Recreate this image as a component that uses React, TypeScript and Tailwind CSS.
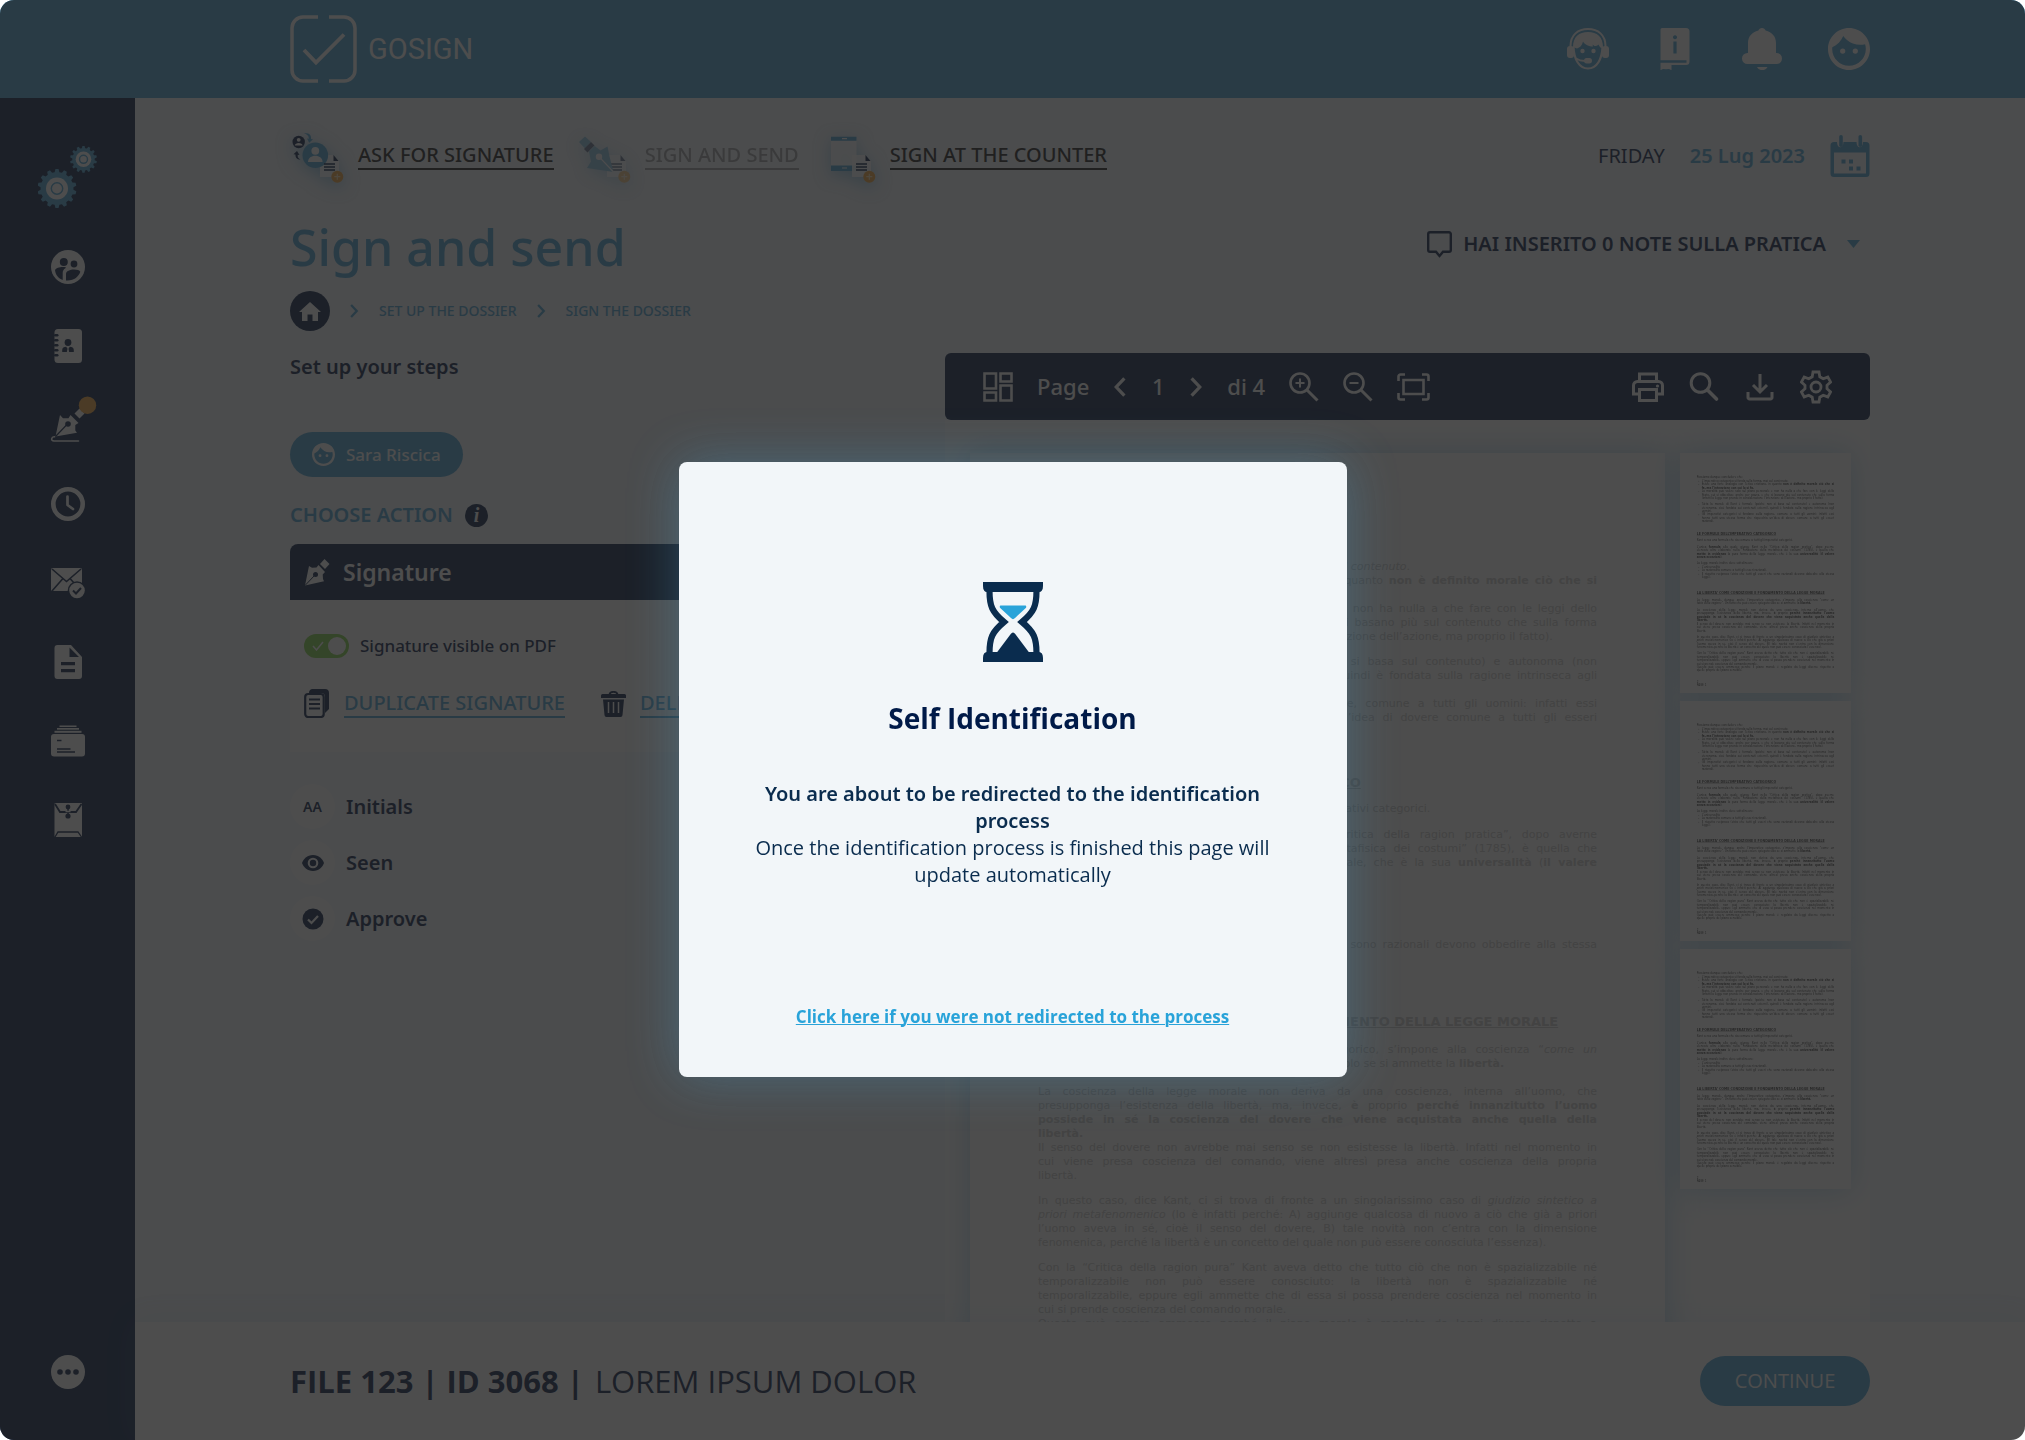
import React, { useState } from 'react';

interface IconProps {
  className?: string;
}

// builds the outline of a round cog with square teeth
const cogPath = (cx: number, cy: number, outer: number, inner: number, teeth: number) => {
  const step = (Math.PI * 2) / teeth;
  const point = (r: number, a: number) => `${(cx + r * Math.cos(a)).toFixed(2)} ${(cy + r * Math.sin(a)).toFixed(2)}`;
  let d = '';
  for (let i = 0; i < teeth; i++) {
    const a = i * step - Math.PI / 2;
    d += `${i === 0 ? 'M' : 'L'}${point(inner, a - step * 0.32)}L${point(outer, a - step * 0.18)}L${point(outer, a + step * 0.18)}L${point(inner, a + step * 0.32)}`;
  }
  return d + 'Z';
};

const Logo: React.FC = () => (
  <svg viewBox="0 0 67 68" className="h-[68px] w-[67px]" fill="none" stroke="currentColor" strokeWidth="3.5">
    <path d="M28 2H13A11 11 0 0 0 2 13v42a11 11 0 0 0 11 11h15M39 2h15a11 11 0 0 1 11 11v42a11 11 0 0 1-11 11H39" />
    <path d="M14 35l12 12.500L54 19.500" strokeWidth="3.800" />
  </svg>
);

const SupportIcon: React.FC<IconProps> = ({ className }) => (
  <svg viewBox="0 0 42 42" className={className} fill="none" stroke="currentColor">
    <path d="M3.500 18C3.500 7 11 1 21 1s17.500 6 17.500 17" strokeWidth="2" />
    <path d="M6.500 19C7 31 12 40.500 21 40.500S35 31 35.500 19" strokeWidth="2.200" />
    <path d="M6 19C6 9 12 4 21 4s15 5 15 15l-2 1c-1-1-2-2-2.500-3.500-1 1-2.500 1.500-4 1.500l-2-1.500.5 2c-4 0-8-1.500-10-5-1 4-3 6-6 7z" fill="currentColor" stroke="none" />
    <rect x="0" y="18" width="7" height="12" rx="3" fill="currentColor" stroke="none" />
    <rect x="35" y="18" width="7" height="12" rx="3" fill="currentColor" stroke="none" />
    <circle cx="15.500" cy="23" r="2.200" fill="currentColor" stroke="none" />
    <circle cx="26.500" cy="23" r="2.200" fill="currentColor" stroke="none" />
    <path d="M9 30.500c3 2 6 2.500 9 2.500" strokeWidth="1.800" />
    <rect x="17" y="30" width="8" height="5.500" rx="2.700" fill="currentColor" stroke="none" />
  </svg>
);

const ManualIcon: React.FC<IconProps> = ({ className }) => (
  <svg viewBox="0 0 42 42" className={className} fill="currentColor">
    <path fillRule="evenodd" d="M6.500 1.500A1.500 1.500 0 0 1 8 0h24a3.500 3.500 0 0 1 3.500 3.500v30a3.500 3.500 0 0 1-3.500 3.500H17.500v5.200L15 41l-3 .3-3-.3-2.500 1.200zM6.500 32.300v2.400H17.500V34.700H32.500v-2.400zM21 7.200a2 2 0 1 0 .01 0zM19.400 13.500v12h3.200v-12z" />
  </svg>
);

const BellIcon: React.FC<IconProps> = ({ className }) => (
  <svg viewBox="0 0 42 42" className={className} fill="currentColor">
    <path d="M21 0c1.800 0 3 1 3.600 2.500C31 4 35 8.500 35 15v10h.5a5.300 5.300 0 0 1 0 11h-29a5.300 5.300 0 0 1 0-11H7V15C7 8.500 11 4 17.400 2.500 18 1 19.200 0 21 0z" />
    <path d="M16 39h10.500c-1 2-3 3.200-5.200 3.200S17 41 16 39z" />
  </svg>
);

const FaceIcon: React.FC<IconProps> = ({ className }) => (
  <svg viewBox="2 2 20 20" className={className} fill="currentColor">
    <path d="M9 11.750a1.250 1.250 0 1 0 0 2.500 1.250 1.250 0 0 0 0-2.500zm6 0a1.250 1.250 0 1 0 0 2.500 1.250 1.250 0 0 0 0-2.500zM12 2C6.480 2 2 6.480 2 12s4.480 10 10 10 10-4.480 10-10S17.520 2 12 2zm0 18c-4.410 0-8-3.590-8-8 0-.29.02-.58.05-.86 2.360-1.050 4.230-2.980 5.210-5.370a9.974 9.974 0 0 0 10.410 3.970c.21.71.33 1.470.33 2.260 0 4.410-3.590 8-8 8z" />
  </svg>
);

const CogsIcon: React.FC = () => (
  <svg viewBox="0 0 60 62" className="h-[62px] w-[60px]">
    <g fill="#4ba5d7">
      <path d={cogPath(19, 42.5, 19.5, 16.5, 14)} />
      <path d={cogPath(45.5, 13.3, 13.5, 11.2, 14)} />
    </g>
    <g fill="#fff" stroke="#4ba5d7" strokeWidth="1.5">
      <circle cx="19" cy="42.500" r="11" stroke="none" />
      <circle cx="19" cy="42.500" r="5.700" />
      <circle cx="45.500" cy="13.300" r="7.800" stroke="none" />
      <circle cx="45.500" cy="13.300" r="4" />
    </g>
  </svg>
);

const sideIcon = 'h-[34px] w-[34px] overflow-visible';

const PeopleIcon: React.FC = () => (
  <svg viewBox="0 0 34 34" className={sideIcon}>
    <circle cx="17" cy="17" r="17" fill="#fff" />
    <g fill="#0a2048">
      <circle cx="12.800" cy="12" r="4" />
      <circle cx="23" cy="14" r="3.400" />
      <path d="M4 20c1-2.500 6-3.500 9.500-3 2 .2 1.500.8.5 1.500-1.500 1-2.300 2.500-2.300 4.500v7C7.500 28.500 4.500 25 4 20z" />
      <path d="M15 30.500V24c0-3 4-4.500 8-4.500 3 0 5.800.8 6.300 2.300-1.500 5-7 9.500-14.300 8.700z" />
    </g>
  </svg>
);

const ContactsIcon: React.FC = () => (
  <svg viewBox="0 0 34 34" className={sideIcon}>
    <rect x="3.500" y="0" width="27.500" height="34" rx="3.500" fill="#fff" />
    <g fill="#0a2048">
      {[5, 10, 15, 20, 25].map((y) => (
        <rect key={y} x="3" y={y} width="4.500" height="2.500" rx="1.200" />
      ))}
      <circle cx="17" cy="13.500" r="3.400" />
      <path d="M11.200 23v-2c0-2.300 1.800-3.300 4-3.300l1.300 2-.7 3.300zM22.800 23v-2c0-2.300-1.800-3.300-4-3.300l-1.300 2 .7 3.300z" />
    </g>
  </svg>
);

const PenIcon: React.FC = () => (
  <svg viewBox="0 0 34 34" className={sideIcon}>
    <g fill="#fff">
      <path d="M9 7l3 3.200h5.500l2-3.200 8 8-3.200 2v5.500l1.700 2.300L4.500 28.500z" />
      <path d="M23.500 5.500l5-5 5 5-5 5z" />
    </g>
    <path d="M4.500 28.500L15.500 17" stroke="#0a2048" strokeWidth="1.200" />
    <circle cx="17" cy="16" r="2.800" fill="#0a2048" />
    <path d="M3.500 28.800C.5 28.500-.8 32.800 3 33h24.500" fill="none" stroke="#fff" strokeWidth="1.600" strokeLinecap="round" />
    <circle cx="36.500" cy="-2.800" r="8.700" fill="#f5a63c" />
  </svg>
);

const ClockIcon: React.FC = () => (
  <svg viewBox="0 0 34 34" className={sideIcon} fill="none" stroke="#fff">
    <circle cx="17" cy="17" r="14.700" strokeWidth="4.600" />
    <path d="M16.500 9.500V18l5.500 4" strokeWidth="2.700" strokeLinecap="round" strokeLinejoin="round" />
  </svg>
);

const MailIcon: React.FC = () => (
  <svg viewBox="0 0 34 34" className={sideIcon}>
    <rect x="0" y="2" width="31" height="23" rx="1.500" fill="#fff" />
    <path d="M1 3l14.500 12.500L30 3M1 25l10.500-12M30 25L19.500 13" fill="none" stroke="#0a2048" strokeWidth="1.600" />
    <circle cx="26" cy="24.500" r="9.300" fill="#0a2048" />
    <circle cx="26" cy="24.500" r="7.800" fill="#fff" />
    <path d="M22 24.500l3 3 5-5.500" fill="none" stroke="#0a2048" strokeWidth="2" />
  </svg>
);

const DocumentIcon: React.FC = () => (
  <svg viewBox="0 0 34 34" className={sideIcon}>
    <path d="M6 0h14l11 12v19a3 3 0 0 1-3 3H6.500a3 3 0 0 1-3-3V3a3 3 0 0 1 3-3z" fill="#fff" />
    <path d="M18.500 2.500v9.500H28zM10 17h14v3.300H10zM10 24h14v3.300H10z" fill="#0a2048" />
  </svg>
);

const CardsIcon: React.FC = () => (
  <svg viewBox="0 0 34 34" className={sideIcon}>
    <g fill="#fff">
      <rect x="8.500" y="1.500" width="17" height="1.500" />
      <rect x="6" y="4" width="22" height="1.700" />
      <rect x="3.500" y="6.800" width="27" height="2" />
      <rect x="0" y="10" width="34" height="22.500" rx="3" />
    </g>
    <path d="M6 16.500h4.500M6 25h13.500M6 28h18" stroke="#0a2048" strokeWidth="1.500" />
  </svg>
);

const EnvelopeIcon: React.FC = () => (
  <svg viewBox="0 0 34 34" className={sideIcon}>
    <rect x="3.500" y="0" width="27.500" height="34" rx="1" fill="#fff" />
    <g fill="none" stroke="#0a2048" strokeWidth="1.800">
      <path d="M4 1l5 8h16l5.500-8" />
      <path d="M4 34l3-5h20l3.500 5" strokeWidth="1.300" />
    </g>
    <rect x="16.300" y="4" width="1.500" height="9" fill="#0a2048" />
    <circle cx="17" cy="4" r="2.400" fill="#0a2048" />
    <circle cx="17" cy="13" r="2.600" fill="#0a2048" />
    <path d="M14.500 8.500h5" stroke="#fff" strokeWidth="1.500" />
  </svg>
);

const MoreIcon: React.FC = () => (
  <svg viewBox="0 0 34 34" className={sideIcon}>
    <circle cx="17" cy="17" r="17" fill="#fff" />
    <g fill="#0a2048">
      <circle cx="9" cy="17" r="2.800" />
      <circle cx="17" cy="17" r="2.800" />
      <circle cx="25" cy="17" r="2.800" />
    </g>
  </svg>
);

// small sheet with an orange plus, shared by the three quick links
const SheetBadge: React.FC = () => (
  <g>
    <path d="M30 27h13l6 6v16H30z" fill="#fff" fillOpacity="0.85" />
    <path d="M43.500 27l5 6h-5z" fill="#0a2048" />
    <path d="M34 36h11M34 39h11M34 42h11" stroke="#0a2048" strokeWidth="1.300" />
    <circle cx="47.300" cy="48.700" r="6" fill="#f5a63c" />
    <path d="M47.300 45.700v6M44.300 48.700h6" stroke="#ffe3b5" strokeWidth="1.200" />
  </g>
);

const quickIcon = 'h-[56px] w-[56px] overflow-visible drop-shadow-[0_4px_8px_rgba(40,140,200,0.5)]';

const AskIcon: React.FC = () => (
  <svg viewBox="0 0 56 56" className={quickIcon}>
    <circle cx="8.700" cy="14" r="6.200" fill="#0a2048" />
    <circle cx="8.700" cy="11.800" r="1.900" fill="#fff" />
    <path d="M4.800 17.500c0-3.500 7.800-3.500 7.800 0z" fill="#fff" />
    <path d="M14 5.500c5-1 7.500 1.500 7 5.500l2 .3-3.800 3.500L17 10.500l1.800.2C19 8 17 6 14 5.500z" fill="#4ba5d7" />
    <path d="M10.500 31.500c-3.500 0-5.300-2-5-5l-2-.3L7 23l2.500 4-1.800-.3c-.3 2.500.8 4 2.800 4.800z" fill="#0a2048" />
    <path d="M30 27h13l6 6v16H30z" fill="#fff" fillOpacity="0.85" />
    <circle cx="25.300" cy="27.300" r="12.800" fill="#4ba5d7" />
    <circle cx="25.300" cy="22.800" r="3.900" fill="#fff" />
    <path d="M18 34c0-8.500 14.600-8.500 14.600 0z" fill="#fff" />
    <path d="M43.500 27l5 6h-5z" fill="#0a2048" />
    <path d="M34 36h11M34 39h11M34 42h11" stroke="#0a2048" strokeWidth="1.300" />
    <circle cx="47.300" cy="48.700" r="6" fill="#f5a63c" />
    <path d="M47.300 45.700v6M44.300 48.700h6" stroke="#ffe3b5" strokeWidth="1.200" />
  </svg>
);

const SendIcon: React.FC = () => (
  <svg viewBox="0 0 56 56" className={`${quickIcon} opacity-60`}>
    <SheetBadge />
    <path d="M2 14l6-5.500 6 5.500-6 6.500z" fill="#4ba5d7" />
    <path d="M7 21l7-7 3.500 3.500-7 7z" fill="#0a2048" />
    <path d="M12 23.500l5.500-5.500 6 4.500 7-4 2 10 4 15.500-26.500-4 4-6.500z" fill="#4ba5d7" />
    <path d="M22 28.700L36.500 44" stroke="#fff" strokeWidth="1.200" />
    <circle cx="22" cy="28.700" r="3.200" fill="#fff" />
  </svg>
);

const CounterIcon: React.FC = () => (
  <svg viewBox="0 0 56 56" className={quickIcon}>
    <rect x="9" y="9" width="25.500" height="34" fill="#fff" fillOpacity="0.85" />
    <path d="M9 8.700h25.500v4H9zM9 37.500h25.500V43H9z" fill="#4ba5d7" />
    <path d="M20 10.700h5M20 40h5" stroke="#fff" strokeWidth="1.200" />
    <SheetBadge />
  </svg>
);

const CalendarIcon: React.FC = () => (
  <svg viewBox="0 0 40 43" className="h-[43px] w-[40px]" fill="#4ba5d7">
    <path fillRule="evenodd" d="M4 7h3c0 7 6.500 7 6.500 0h13c0 7 6.500 7 6.500 0h3a3.500 3.500 0 0 1 3.500 3.500v28a3.500 3.500 0 0 1-3.500 3.500H4a3.500 3.500 0 0 1-3.500-3.500v-28A3.500 3.500 0 0 1 4 7zm0 10.500v21h32v-21z" />
    <rect x="9.200" y="0" width="3.600" height="12" rx="1.800" />
    <rect x="28.500" y="0" width="3.600" height="12" rx="1.800" />
    <path d="M11.500 24.500h4v4h-4zM19 24.500h4v4h-4zM19 31.500h4v4h-4zM26.500 31.500h4v4h-4z" />
  </svg>
);

const Chevron: React.FC<IconProps & { back?: boolean }> = ({ className, back }) => (
  <svg viewBox="0 0 12 18" className={className} fill="none" stroke="currentColor" strokeWidth="3">
    <path d={back ? 'M10.500 1L3 9l7.500 8' : 'M1.500 1L9 9l-7.500 8'} />
  </svg>
);

const toolIcon = 'h-8 w-8';

const LayoutIcon: React.FC = () => (
  <svg viewBox="0 0 30 30" className="h-[30px] w-[30px]" fill="none" stroke="currentColor" strokeWidth="2.6">
    <path d="M1.500 1.500h11.500v15H1.500zM17.500 1.500h11v8h-11zM17.500 13.500h11v15h-11zM1.500 20.500h11.500v8H1.500z" />
  </svg>
);

const ZoomIcon: React.FC<{ plus?: boolean }> = ({ plus }) => (
  <svg viewBox="0 0 30 30" className="h-[30px] w-[30px]" fill="none" stroke="currentColor" strokeWidth="2.6">
    <circle cx="11" cy="11" r="9.500" />
    <path d="M18 18l10.500 10.500" strokeWidth="3" />
    <path d={plus ? 'M6.500 11h9M11 6.500v9' : 'M6.500 11h9'} strokeWidth="2" />
  </svg>
);

const FitIcon: React.FC = () => (
  <svg viewBox="0 0 33 28" className="h-7 w-[33px]" fill="none" stroke="currentColor" strokeWidth="2.6">
    <path d="M6.500 7h20v14h-20z" />
    <path d="M1.500 8V3.500a2 2 0 0 1 2-2H8M25 1.500h4.500a2 2 0 0 1 2 2V8M31.500 20v4.500a2 2 0 0 1-2 2H25M8 26.500H3.500a2 2 0 0 1-2-2V20" />
  </svg>
);

const PrintIcon: React.FC = () => (
  <svg viewBox="0 0 32 32" className={toolIcon} fill="none" stroke="currentColor" strokeWidth="3">
    <path d="M7.500 10V3h17v7M7.500 23H1.500V14.500a4 4 0 0 1 4-4h21a4 4 0 0 1 4 4V23h-6" />
    <path d="M7.500 18.500h17v11h-17z" />
    <circle cx="25.500" cy="15" r="1.600" fill="currentColor" stroke="none" />
  </svg>
);

const SearchIcon: React.FC = () => (
  <svg viewBox="0 0 32 32" className={toolIcon} fill="none" stroke="currentColor" strokeWidth="3">
    <circle cx="12.500" cy="12" r="9.300" />
    <path d="M19.500 19l9 9" strokeWidth="3.600" strokeLinecap="round" />
  </svg>
);

const DownloadIcon: React.FC = () => (
  <svg viewBox="0 0 32 32" className={toolIcon} fill="none" stroke="currentColor" strokeWidth="3">
    <path d="M16 3v18M9 14l7 7 7-7M4 21v5.500a1.500 1.500 0 0 0 1.500 1.500h21a1.500 1.500 0 0 0 1.500-1.500V21" />
  </svg>
);

const GearIcon: React.FC = () => (
  <svg viewBox="0 0 32 34" className="h-[34px] w-8" fill="none" stroke="currentColor" strokeWidth="2.8">
    <path d="M13 2h6l.8 4.800 3.400 2 4.600-1.700 2.800 5-3.600 3.200v3.400l3.600 3.200-2.800 5-4.600-1.700-3.400 2L19 32h-6l-.8-4.800-3.400-2-4.600 1.700-2.800-5L5 18.700v-3.400l-3.600-3.200 2.800-5 4.600 1.700 3.400-2z" />
    <circle cx="16" cy="17" r="5" />
  </svg>
);

const NibIcon: React.FC = () => (
  <svg viewBox="0 0 27 27" className="h-[27px] w-[27px]">
    <path d="M5 7l3 1.800 4.500-.3 2-2.500 6.500 7-2.300 2.500.3 4.500 1 2.300L1 26.500z" fill="#fff" />
    <path d="M20.500 0l5 5-4.500 5-5-5z" fill="#fff" />
    <path d="M1 26.500L11 16" stroke="#0a2048" strokeWidth="1" />
    <circle cx="11.500" cy="15.500" r="2.500" fill="#0a2048" />
  </svg>
);

const CopyIcon: React.FC = () => (
  <svg viewBox="0 0 25 29" className="h-[29px] w-[25px]">
    <path d="M8 0h13a4 4 0 0 1 4 4v16l-4 4V8a4 4 0 0 0-4-4H5a4 4 0 0 1 3-4z" fill="#0a2048" />
    <rect x="1.200" y="5" width="18.500" height="23" rx="3" fill="#fff" stroke="#0a2048" strokeWidth="2.200" />
    <path d="M5 10.500h11M5 15h11M5 19.500h11" stroke="#0a2048" strokeWidth="1.800" />
  </svg>
);

const TrashIcon: React.FC = () => (
  <svg viewBox="0 0 25 26" className="h-[26px] w-[25px]">
    <path d="M8.500 3.500C9 0 16 0 16.500 3.500" fill="none" stroke="#0a2048" strokeWidth="1.800" />
    <path d="M1.500 3h22A1.500 1.500 0 0 1 25 4.500V7H0V4.500A1.500 1.500 0 0 1 1.500 3zM2 8.500h21L21.500 24a2 2 0 0 1-2 2h-14a2 2 0 0 1-2-2z" fill="#0a2048" />
    <path d="M7.500 11v11M12.500 11v11M17.500 11v11" stroke="#fff" strokeWidth="1.500" />
  </svg>
);

const EyeIcon: React.FC = () => (
  <svg viewBox="0 0 22 16" className="h-4 w-[22px]">
    <path d="M11 0C5 0 1.500 4 0 8c1.500 4 5 8 11 8s9.500-4 11-8c-1.500-4-5-8-11-8z" fill="#0a2048" />
    <circle cx="11" cy="8" r="5.300" fill="#fff" />
    <circle cx="11" cy="8" r="3.200" fill="#0a2048" />
  </svg>
);

const ApproveIcon: React.FC = () => (
  <svg viewBox="0 0 22 22" className="h-[22px] w-[22px]">
    <circle cx="11" cy="11" r="10.500" fill="#0a2048" />
    <path d="M6 11.500l3.500 3.500 6.500-7" fill="none" stroke="#fff" strokeWidth="2.200" />
  </svg>
);

const HourglassIcon: React.FC = () => (
  <svg viewBox="0 0 60 80" className="h-20 w-[60px]">
    <path d="M6.500 9C6.500 24 9 30 21 40 9 50 6.500 56 6.500 71M53.500 9c0 15-2.500 21-14.500 31 12 10 14.500 16 14.500 31" fill="none" stroke="#0a2c4e" strokeWidth="6.200" />
    <path d="M0 0h60v4c0 4-1.500 6-4 6H4C1.500 10 0 8 0 4zM0 80h60v-4c0-4-1.500-6-4-6H4c-2.500 0-4 2-4 6z" fill="#0a2c4e" />
    <path d="M13.500 71L27 53c2-3.500 4-3.500 6 0l13.500 18z" fill="#0a2c4e" />
    <path d="M18 23.500h24c1.500 0 1.500 1.500.8 2.500L32 36c-1.300 1.500-2.700 1.500-4 0L17.200 26c-.7-1-.7-2.500.8-2.500z" fill="#29a3d9" />
  </svg>
);

const sideItems = [
  { label: 'People', icon: <PeopleIcon /> },
  { label: 'Contacts', icon: <ContactsIcon /> },
  { label: 'Signatures', icon: <PenIcon /> },
  { label: 'History', icon: <ClockIcon /> },
  { label: 'Mail', icon: <MailIcon /> },
  { label: 'Documents', icon: <DocumentIcon /> },
  { label: 'Cards', icon: <CardsIcon /> },
  { label: 'Envelopes', icon: <EnvelopeIcon /> },
];

const steps = [
  { label: 'Initials', icon: <span className="text-sm">AA</span> },
  { label: 'Seen', icon: <EyeIcon /> },
  { label: 'Approve', icon: <ApproveIcon /> },
];

// text set line by line like the PDF: every line but the last fills the column
const Lines: React.FC<{ rows: React.ReactNode[] }> = ({ rows }) => (
  <>
    {rows.map((row, i) => (
      <span key={i} className={i < rows.length - 1 ? 'block whitespace-nowrap [text-align-last:justify]' : 'block whitespace-nowrap'}>
        {row}
      </span>
    ))}
  </>
);

// one page of the PDF, used full size and for the previews
const PdfSheet: React.FC<IconProps> = ({ className }) => (
  <div className={`min-h-[976px] bg-white px-[68px] pt-[93px] font-['DejaVu_Sans',sans-serif] text-[11px] leading-[14px] ${className}`}>
    <p>Possiamo dunque concludere che:</p>
    <ul className="list-disc pl-5">
      <li>L’imperativo categorico si fonda sulla forma, <i>mai sul contenuto</i>.</li>
      <li>
        <Lines
          rows={[
            <>Esiste una forte analogia con l’etica cristiana, in quanto <b>non è definito morale ciò che si</b></>,
            <b>fa, ma l’intenzione con cui lo si fa.</b>,
          ]}
        />
      </li>
      <li>
        <Lines
          rows={[
            'La moralità può valere solo sul piano personale e non ha nulla a che fare con le leggi dello',
            'Stato, cui si obbedisce anche per paura, e che si basano più sul contenuto che sulla forma',
            '(infatti la legge non prende in considerazione l’intenzione dell’azione, ma proprio il fatto).',
          ]}
        />
      </li>
    </ul>
    <ul className="mt-[11px] list-disc pl-5">
      <li>
        <Lines
          rows={[
            'Tutta la morale di Kant è formale (poiché non si basa sul contenuto) e autonoma (non',
            'eteronoma, cioè fondata sui contenuti esterni), quindi è fondata sulla ragione intrinseca agli',
            'uomini.',
          ]}
        />
      </li>
      <li>
        <Lines
          rows={[
            'Gli imperativi categorici si fondano sulla ragione, comune a tutti gli uomini: infatti essi',
            'hanno tutti una stessa forma che rispecchia un’idea di dovere comune a tutti gli esseri',
            'razionali.',
          ]}
        />
      </li>
    </ul>
    <h3 className="mt-[37px] text-[13px] leading-[14px] font-bold underline">LE FORMULE DELL’IMPERATIVO CATEGORICO</h3>
    <p className="mt-3">Kant cerca una formula che sia comune a tutti gli imperativi categorici.</p>
    <p className="mt-3">
      <Lines
        rows={[
          <>L’unica <b>formula</b> alla quale giunge Kant nella “Critica della ragion pratica”, dopo averne</>,
          'elencate altre elaborate nella “Fondazione della metafisica dei costumi” (1785), è quella che',
          <><b>mette in evidenza</b> la pura forma della legge morale, che è la sua <b>universalità</b> (<b>il valere</b></>,
          <><b>senza eccezioni</b>).</>,
        ]}
      />
    </p>
    <p className="mt-3">La legge morale inoltre deve sottolineare:</p>
    <ul className="list-disc pl-5">
      <li>L’universalità</li>
      <li>La razionalità comune a tutti gli esseri razionali.</li>
      <li>
        <Lines rows={['Il rispetto reciproco (visto che tutti gli esseri che sono razionali devono obbedire alla stessa', 'legge).']} />
      </li>
    </ul>
    <h3 className="mt-[49px] text-[13px] leading-[14px] font-bold whitespace-nowrap underline">LA LIBERTA’ COME CONDIZIONE E FONDAMENTO DELLA LEGGE MORALE</h3>
    <p className="mt-[14px]">
      <Lines
        rows={[
          <>La legge morale, dunque anche l’imperativo categorico, s’impone alla coscienza “<i>come un</i></>,
          <><i>fatto della ragione</i>”. Un fatto che può essere spiegato solo se si ammette la <b>libertà.</b></>,
        ]}
      />
    </p>
    <p className="mt-[14px]">
      <Lines
        rows={[
          'La coscienza della legge morale non deriva da una coscienza, interna all’uomo, che',
          <>presupponga l’esistenza della libertà, ma, invece, <b>è</b> proprio <b>perché innanzitutto l’uomo</b></>,
          <b>possiede in sé la coscienza del dovere che viene acquistata anche quella della</b>,
          <b>libertà.</b>,
        ]}
      />
    </p>
    <p>
      <Lines
        rows={[
          'Il senso del dovere non avrebbe mai senso se non esistesse la libertà. Infatti nel momento in',
          'cui viene presa coscienza del comando, viene altresì presa anche coscienza della propria',
          'libertà.',
        ]}
      />
    </p>
    <p className="mt-[11px]">
      <Lines
        rows={[
          <>In questo caso, dice Kant, ci si trova di fronte a un singolarissimo caso di <i>giudizio sintetico a</i></>,
          <><i>priori metafenomenico</i> (lo è infatti perché: A) aggiunge qualcosa di nuovo a ciò che già a priori</>,
          'l’uomo aveva in sé, cioè il senso del dovere,  B) tale novità non c’entra con la dimensione',
          'fenomenica, perché la libertà è un concetto del quale non può essere conosciuta l’essenza).',
        ]}
      />
    </p>
    <p className="mt-[11px]">
      <Lines
        rows={[
          'Con la “Critica della ragion pura” Kant aveva detto che tutto ciò che non è spazializzabile né',
          'temporalizzabile non può essere conosciuto: la libertà non è spazializzabile né',
          'temporalizzabile, eppure egli ammette che di essa si possa prendere coscienza nel momento in',
          'cui si prende coscienza del comando morale.',
        ]}
      />
    </p>
    <p>
      <Lines
        rows={[
          'Questo può essere ammesso perché il piano morale è regolato da leggi diverse rispetto a',
          'quelle proprie del piano sensibile.',
        ]}
      />
    </p>
    <p className="mt-8">2<br />PAGE 1</p>
  </div>
);

const Viewer: React.FC = () => {
  const [page, setPage] = useState('1');

  return (
    <section className="flex min-h-0 flex-col">
      <div className="flex h-[67px] shrink-0 items-center justify-between rounded-md bg-[#0a2048] px-[38px] font-['Noto_Sans',sans-serif] text-[22px] font-medium text-white">
        <div className="flex items-center gap-6">
          <button aria-label="Layout"><LayoutIcon /></button>
          <label htmlFor="page">Page</label>
          <button aria-label="Previous page"><Chevron back className="h-5 w-[13px]" /></button>
          <input id="page" type="text" value={page} onChange={(e) => setPage(e.target.value)} className="w-4 bg-transparent text-center" />
          <button aria-label="Next page"><Chevron className="h-5 w-[13px]" /></button>
          <span>di 4</span>
          <button aria-label="Zoom in"><ZoomIcon plus /></button>
          <button aria-label="Zoom out"><ZoomIcon /></button>
          <button aria-label="Fit page"><FitIcon /></button>
        </div>
        <div className="flex items-center gap-6">
          <button aria-label="Print"><PrintIcon /></button>
          <button aria-label="Search"><SearchIcon /></button>
          <button aria-label="Download"><DownloadIcon /></button>
          <button aria-label="Settings"><GearIcon /></button>
        </div>
      </div>
      <div className="flex min-h-0 flex-1 items-start gap-[15px] overflow-hidden bg-white pt-[33px] pr-[19px] pl-[25px]">
        <PdfSheet className="min-w-0 flex-1 text-[#cacaca] shadow-[0_0_30px_rgba(60,150,205,0.4)]" />
        <div className="flex w-[171px] shrink-0 flex-col gap-2">
          {[1, 2, 3].map((n) => (
            <div key={n} className="h-[240px] shadow-[0_0_30px_rgba(60,150,205,0.4)]">
              <div className="h-full overflow-hidden bg-white">
                <PdfSheet className="w-[695px] origin-top-left scale-[0.246] text-[#444]" />
              </div>
            </div>
          ))}
        </div>
      </div>
    </section>
  );
};

const SignaturePanel: React.FC = () => {
  const [visible, setVisible] = useState(true);

  return (
    <div>
      <h3 className="flex h-14 items-center gap-3 rounded-t-lg bg-[#0a2048] px-[14px] text-[23px] font-semibold text-white">
        <NibIcon />
        Signature
      </h3>
      <div className="h-[152px] bg-white px-[14px] pt-[34px] font-medium">
        <label className="flex h-6 w-fit items-center gap-[11px] text-[17px] text-[#0a2048]">
          <input type="checkbox" checked={visible} onChange={(e) => setVisible(e.target.checked)} className="peer sr-only" />
          <span className="flex h-6 w-[45px] items-center justify-between rounded-full bg-[#84d44a] pr-[3px] pl-2">
            <svg viewBox="0 0 12 10" className="h-[10px] w-3" fill="none" stroke="#fff" strokeWidth="1.500">
              <path d="M1 5l3.500 4L11 1" />
            </svg>
            <span className="h-[18px] w-[18px] rounded-full bg-white" />
          </span>
          Signature visible on PDF
        </label>
        <div className="mt-[31px] flex items-center gap-9 text-xl text-[#4ba5d7]">
          <a href="#duplicate" className="flex items-center gap-[15px]">
            <CopyIcon />
            <span className="border-b-2 border-[#4ba5d7] leading-[26px]">DUPLICATE SIGNATURE</span>
          </a>
          <a href="#delete" className="flex items-center gap-[14px]">
            <TrashIcon />
            <span className="border-b-2 border-[#4ba5d7] leading-[26px]">DELETE</span>
          </a>
        </div>
      </div>
    </div>
  );
};

const IdentificationModal: React.FC = () => (
  <div className="fixed inset-0 flex items-center justify-center overflow-hidden rounded-[14px] bg-[#202020]/80 pt-[98px]">
    <div role="dialog" aria-labelledby="modal-title" className="flex w-[668px] flex-col items-center rounded-lg bg-[#f2f6f9] px-[72px] pt-[120px] pb-[47px] text-center text-xl leading-[27px] text-[#0a2c4e] shadow-[0_0_52px_rgba(75,165,215,0.32)]">
      <HourglassIcon />
      <h2 id="modal-title" className="mt-[37px] text-[28px] leading-[38px] font-bold text-[#001a48]">Self Identification</h2>
      <p className="mt-[43px] font-['Noto_Sans',sans-serif] font-semibold">You are about to be redirected to the identification process</p>
      <p>Once the identification process is finished this page will update automatically</p>
      <a href="#identification" className="mt-[115px] text-[17px] font-bold text-[#29a3d9] underline decoration-1">Click here if you were not redirected to the process</a>
    </div>
  </div>
);

const quickLink = 'border-b-2 leading-[26px]';

const App: React.FC = () => {
  return (
    <div className="h-screen bg-white font-['Open_Sans',sans-serif]">
      <div className="flex h-full flex-col overflow-hidden rounded-[14px] bg-[#f2f7fc] font-['Noto_Sans',sans-serif]">
        <header className="flex h-[98px] shrink-0 items-center justify-between bg-[#4ba5d7] pr-[155px] pl-[290px] text-white">
          <a href="#home" className="flex items-center gap-[11px]">
            <Logo />
            <span className="pt-[2px] font-['Roboto',sans-serif] text-[29px]">GOSIGN</span>
          </a>
          <div className="flex items-center gap-[45px]">
            <button aria-label="Support"><SupportIcon className="h-[42px] w-[42px]" /></button>
            <button aria-label="Manual"><ManualIcon className="h-[42px] w-[42px]" /></button>
            <button aria-label="Notifications"><BellIcon className="h-[42px] w-[42px]" /></button>
            <button aria-label="Profile"><FaceIcon className="h-[42px] w-[42px]" /></button>
          </div>
        </header>

        <div className="flex min-h-0 flex-1">
          <nav className="flex w-[135px] shrink-0 flex-col items-center bg-[#0a2048] pt-12 pb-[51px]">
            <button aria-label="Processes"><CogsIcon /></button>
            <div className="mt-[42px] flex flex-col gap-[45px]">
              {sideItems.map((item) => (
                <button key={item.label} aria-label={item.label}>{item.icon}</button>
              ))}
            </div>
            <button aria-label="More" className="mt-auto"><MoreIcon /></button>
          </nav>

          <main className="flex min-w-0 flex-1 flex-col">
            <div className="flex min-h-0 flex-1 flex-col px-[155px] pt-[30px]">
              <div className="flex h-14 items-center justify-between">
                <div className="flex items-center gap-[23px] text-xl font-medium text-[#222]">
                  <a href="#ask" className="flex items-center gap-3"><AskIcon /><span className={quickLink}>ASK FOR SIGNATURE</span></a>
                  <a href="#send" className="flex items-center gap-3"><SendIcon /><span className={`${quickLink} opacity-40`}>SIGN AND SEND</span></a>
                  <a href="#counter" className="flex items-center gap-3"><CounterIcon /><span className={quickLink}>SIGN AT THE COUNTER</span></a>
                </div>
                <div className="flex items-center gap-[25px] text-xl text-[#0a2048]">
                  <span>FRIDAY</span>
                  <span className="font-semibold text-[#4ba5d7]">25 Lug 2023</span>
                  <CalendarIcon />
                </div>
              </div>

              <div className="mt-[33px] flex items-start justify-between">
                <h1 className="text-[50px] leading-[60px] font-medium text-[#4ba5d7]">Sign and send</h1>
                <button className="flex h-[54px] items-center gap-[11px] pr-[10px] text-xl font-semibold text-[#0a2048]">
                  <svg viewBox="0 0 25 27" className="h-[27px] w-[25px]" fill="none" stroke="currentColor" strokeWidth="2.400">
                    <path d="M3 1.200h19a1.800 1.800 0 0 1 1.800 1.800v16a1.800 1.800 0 0 1-1.800 1.800h-6L12.500 25 9 20.800H3A1.800 1.800 0 0 1 1.200 19V3A1.800 1.800 0 0 1 3 1.200z" />
                  </svg>
                  HAI INSERITO 0 NOTE SULLA PRATICA
                  <svg viewBox="0 0 13 8" className="ml-[10px] h-2 w-[13px]" fill="#4ba5d7"><path d="M0 0h13L6.500 8z" /></svg>
                </button>
              </div>

              <div className="mt-[14px] flex items-center gap-5 text-sm font-medium text-[#4ba5d7]">
                <a href="#home" aria-label="Home" className="flex h-10 w-10 items-center justify-center rounded-full bg-[#0a2048]">
                  <svg viewBox="0 0 22 19" className="h-[19px] w-[22px]" fill="#fff"><path d="M11 0l11 10h-3v9h-5.500v-6.500h-5V19H3v-9H0z" /></svg>
                </a>
                <Chevron className="h-[14px] w-[9px]" />
                <a href="#setup">SET UP THE DOSSIER</a>
                <Chevron className="h-[14px] w-[9px]" />
                <a href="#sign">SIGN THE DOSSIER</a>
              </div>

              <div className="mt-[22px] grid min-h-0 flex-1 grid-cols-[minmax(0,615fr)_minmax(0,925fr)] gap-10">
                <section>
                  <h2 className="text-xl font-semibold text-[#0a2048]">Set up your steps</h2>
                  <button className="mt-[51px] flex h-[45px] items-center gap-[11px] rounded-full bg-[#4ba5d7] px-[22px] text-[17px] font-medium text-white">
                    <FaceIcon className="h-[23px] w-[23px]" />
                    Sara Riscica
                  </button>
                  <div className="mt-6 mb-[15px] flex items-center gap-3 text-xl font-semibold text-[#4ba5d7]">
                    CHOOSE ACTION
                    <span className="flex h-[23px] w-[23px] items-center justify-center rounded-full bg-[#0a2048] font-['Liberation_Serif',serif] text-xl leading-none font-bold text-white italic">i</span>
                  </div>
                  <SignaturePanel />
                  <ul className="mt-8 flex flex-col gap-[11px] text-xl font-semibold text-[#0a2048]">
                    {steps.map((step) => (
                      <li key={step.label}>
                        <button className="flex items-center gap-[11px]">
                          <span className="flex h-[45px] w-[45px] items-center justify-center rounded-full bg-white">{step.icon}</span>
                          {step.label}
                        </button>
                      </li>
                    ))}
                  </ul>
                </section>
                <Viewer />
              </div>
            </div>

            <footer className="relative flex h-[118px] shrink-0 items-center justify-between bg-white px-[155px] font-['Open_Sans',sans-serif] text-[#0a2048] shadow-[0_0_30px_rgba(60,150,205,0.1)]">
              <p className="text-[31px]"><b className="mr-[3px]">FILE 123 | ID 3068 |</b> LOREM IPSUM DOLOR</p>
              <button className="h-[50px] w-[170px] rounded-full bg-[#4ba5d7] text-xl text-white">CONTINUE</button>
            </footer>
          </main>
        </div>
      </div>
      <IdentificationModal />
    </div>
  );
};

export default App;
